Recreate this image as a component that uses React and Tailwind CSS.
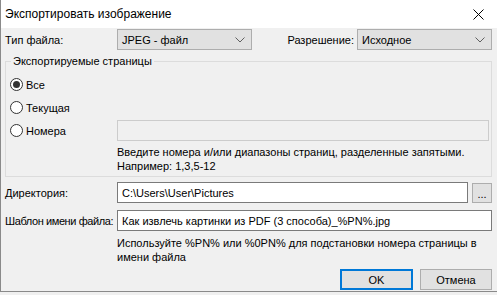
import React from "react";

const Chevron = () => (
  <svg width="10" height="6" viewBox="0 0 10 6" className="shrink-0">
    <path d="M0.5 0.5 L5 5 L9.5 0.5" fill="none" stroke="#606060" strokeWidth="1" />
  </svg>
);

const Combo = ({ value }) => (
  <div className="w-[135px] h-[21px] bg-[#e1e1e1] border border-[#adadad] flex items-center justify-between pl-[4px] pr-[6px]">
    <span>{value}</span>
    <Chevron />
  </div>
);

const Radio = ({ checked, label }) => (
  <div className="flex items-center gap-[3px]">
    <span className="w-[13px] h-[13px] rounded-full border border-[#333] bg-white flex items-center justify-center">
      {checked && <span className="w-[7px] h-[7px] rounded-full bg-[#333]" />}
    </span>
    <span>{label}</span>
  </div>
);

export default function App() {
  return (
    <div
      className="w-[497px] h-[295px] bg-[#f0f0f0] text-[11px] leading-[14px] text-black overflow-hidden"
      style={{ fontFamily: '"Liberation Sans", Arial, sans-serif' }}
    >
      <div className="h-[292px] border-l border-b border-[#8a8a8a]">
        {/* title bar */}
        <div className="h-[28px] bg-white flex items-center justify-between pl-[4px] pr-[13px] text-[12px]">
          <span>Экспортировать изображение</span>
          <svg width="11" height="11" viewBox="0 0 11 11">
            <path d="M0.5 0.5 L10.5 10.5 M10.5 0.5 L0.5 10.5" stroke="#000" strokeWidth="1" />
          </svg>
        </div>

        <div className="pl-[4px] pr-[5px]">
          {/* file type / resolution */}
          <div className="flex items-center mt-[1px]">
            <span className="w-[112px]">Тип файла:</span>
            <Combo value="JPEG - файл" />
            <span className="ml-auto mr-[3px]">Разрешение:</span>
            <Combo value="Исходное" />
          </div>

          {/* pages group */}
          <fieldset className="mt-[4px] border border-[#dcdcdc] pb-[3px]">
            <legend className="ml-[5px] px-[2px]">Экспортируемые страницы</legend>
            <div className="pl-[4px] mt-[5px]">
              <div className="h-[23px] flex items-center">
                <Radio checked label="Все" />
              </div>
              <div className="h-[23px] flex items-center">
                <Radio label="Текущая" />
              </div>
              <div className="h-[23px] flex items-center">
                <div className="w-[107px]">
                  <Radio label="Номера" />
                </div>
                <div className="flex-1 mr-[2px] h-[21px] border border-[#cccccc] bg-[#f0f0f0]" />
              </div>
              <div className="pl-[107px] mt-[3px] whitespace-nowrap">
                <div>Введите номера и/или диапазоны страниц, разделенные запятыми.</div>
                <div>Например: 1,3,5-12</div>
              </div>
            </div>
          </fieldset>

          {/* directory */}
          <div className="flex items-center mt-[5px]">
            <span className="w-[112px] whitespace-nowrap">Директория:</span>
            <div className="flex-1 h-[21px] bg-white border border-[#7a7a7a] flex items-center pl-[4px]">
              C:\Users\User\Pictures
            </div>
            <div className="ml-[4px] w-[20px] h-[20px] bg-[#e1e1e1] border border-[#adadad] flex items-end justify-center pb-[3px] leading-[10px]">
              ...
            </div>
          </div>

          {/* file name template */}
          <div className="flex items-center mt-[7px]">
            <span className="w-[112px] whitespace-nowrap tracking-[-0.4px]">Шаблон имени файла:</span>
            <div className="flex-1 h-[21px] bg-white border border-[#7a7a7a] flex items-center pl-[4px]">
              Как извлечь картинки из PDF (3 способа)_%PN%.jpg
            </div>
          </div>
          <div className="pl-[112px] mt-[5px]">
            <div className="whitespace-nowrap">Используйте %PN% или %0PN% для подстановки номера страницы в</div>
            <div>имени файла</div>
          </div>

          {/* buttons */}
          <div className="flex justify-end gap-[7px] mt-[5px]">
            <button className="w-[73px] h-[21px] bg-[#e1e1e1] border-2 border-[#0078d7]">OK</button>
            <button className="w-[72px] h-[21px] bg-[#e1e1e1] border border-[#adadad]">Отмена</button>
          </div>
        </div>
      </div>
    </div>
  );
}
